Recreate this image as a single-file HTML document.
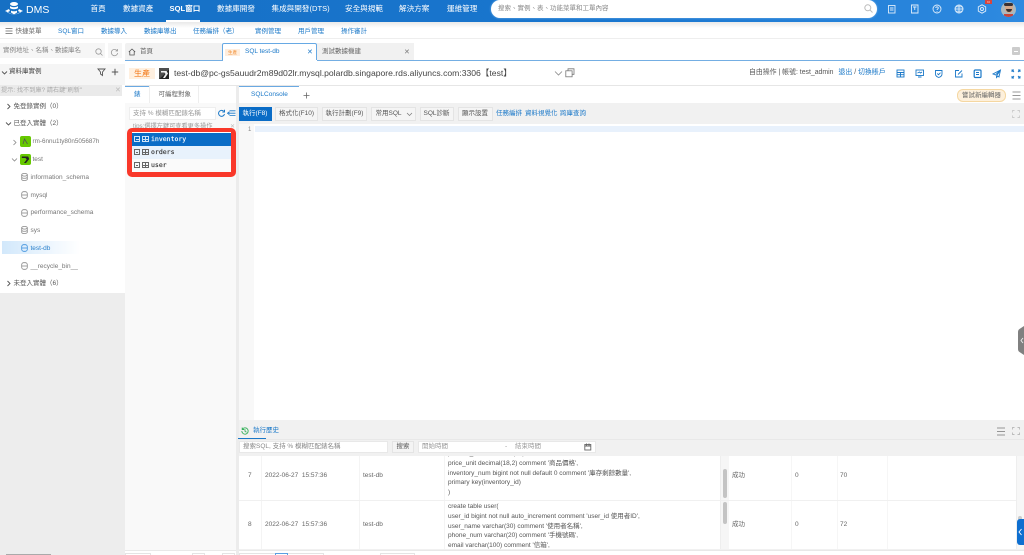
<!DOCTYPE html>
<html lang="zh-Hant"><head><meta charset="utf-8"><title>DMS</title>
<style>
*{box-sizing:border-box}
html,body{margin:0;padding:0;width:1024px;height:555px;overflow:hidden;background:#fff}
body{font-family:"Liberation Sans","Noto Sans CJK TC",sans-serif;font-size:7px;color:#555}
#w{position:absolute;left:0;top:0;width:1024px;height:555px;overflow:hidden;filter:blur(.35px)}
.a{position:absolute;white-space:nowrap;line-height:1}
.b{position:absolute}
.n{color:#fff;font-size:7.6px;top:4.500px}
.s{color:#1a78c8;font-size:6.500px;top:28.500px}
.t{font-size:6.500px;color:#666}
.bt{position:absolute;top:107px;height:14px;background:#f5f5f5;border:1px solid #e4e4e4;font-size:6.500px;color:#555;text-align:center;line-height:12.500px;white-space:nowrap}
svg{position:absolute;overflow:visible}
.ic{fill:none;stroke:#1a78c8;stroke-width:.9}
.wi{fill:none;stroke:#fff;stroke-width:.9;opacity:.85}
.m{font-family:"DejaVu Sans Mono","Liberation Mono",monospace;font-size:6.500px;color:#333;-webkit-text-stroke:.15px currentColor}
.sq{position:absolute;width:6px;height:6px;border:1px solid #666}
.sq:after{content:"";position:absolute;left:1px;top:1.500px;width:2px;height:1px;background:#666}
.g{position:absolute;width:7px;height:6px;border:1px solid #666;background:linear-gradient(#666,#666) 0 1.500px/100% 1px no-repeat,linear-gradient(#666,#666) 2px 0/1px 100% no-repeat}
.db{fill:none;stroke:#888;stroke-width:.8}
.r{font-size:6.500px;color:#555}
.arrow{fill:none;stroke:#555;stroke-width:.9}
</style></head><body><div id="w">

<!-- top bar -->
<div class="b" style="left:0;top:0;width:1024px;height:22px;background:linear-gradient(90deg,#1670c4,#1976cf 60%,#2e8ae0)"></div>
<svg style="left:4px;top:1px" width="20" height="16" viewBox="0 0 20 16"><ellipse cx="10" cy="3" rx="4" ry="2" fill="#fff"/><path d="M6 5c1 1.600 7 1.600 8 0v2c-1 1.600-7 1.600-8 0z" fill="#fff"/><path d="M7 9.500c1 1 5 1 6 0v2l-3 2-3-2z" fill="#fff"/><path d="M1 10l4-2 1 2-3 1.500 7 2.500 7-2.500-3-1.500 1-2 4 2-9 4z" fill="#fff"/></svg>
<div class="a" style="left:26px;top:4.500px;color:#fff;font-size:10.500px">DMS</div>
<div class="a n" style="left:90.500px">首頁</div>
<div class="a n" style="left:123px">數據資產</div>
<div class="a n" style="left:169.500px;font-weight:bold">SQL窗口</div>
<div class="a n" style="left:217px">數據庫開發</div>
<div class="a n" style="left:271.500px">集成與開發(DTS)</div>
<div class="a n" style="left:345px">安全與規範</div>
<div class="a n" style="left:399px">解決方案</div>
<div class="a n" style="left:447px">運維管理</div>
<div class="b" style="left:166px;top:20px;width:34px;height:2px;background:#fff"></div>
<div class="b" style="left:491px;top:0;width:386px;height:17.500px;background:#fff;border-radius:9px;box-shadow:0 0 2px #7ab5ea"></div>
<div class="a" style="left:498px;top:5.500px;font-size:6.500px;color:#888">搜索、實例、表、功能菜單和工單內容</div>
<svg style="left:864px;top:4px" width="9" height="9" viewBox="0 0 9 9"><circle cx="3.800" cy="3.800" r="3" fill="none" stroke="#bbb"/><path d="M6 6l2.500 2.500" stroke="#bbb"/></svg>
<svg style="left:887px;top:4px" width="10" height="10"><rect x="1.500" y="1.500" width="6.500" height="7.500" class="wi"/><path d="M3 4h3.500M3 6h3.500" class="wi"/></svg>
<svg style="left:910px;top:4px" width="10" height="10"><path d="M1.500 1h6.500v8h-6.500zM3 3h3.500M4.750 3v3" class="wi"/></svg>
<svg style="left:932px;top:4px" width="10" height="10"><circle cx="5" cy="5" r="4" class="wi"/><path d="M3.800 4c0-1.500 2.500-1.500 2.500 0 0 1-1.300 1-1.300 2M5 7v.7" class="wi"/></svg>
<svg style="left:954px;top:4px" width="10" height="10"><circle cx="5" cy="5" r="4" class="wi"/><path d="M1 5h8M5 1v8M2 2.800h6M2 7.200h6" class="wi"/></svg>
<svg style="left:977px;top:4px" width="10" height="10"><path d="M5 .8l3.700 2.100v4.200L5 9.200 1.300 7.100V2.900z" class="wi"/><circle cx="5" cy="5" r="1.500" class="wi"/></svg>
<div class="b" style="left:985px;top:0;width:7px;height:4px;background:#d9443a;color:#fff;font-size:3px;line-height:4px;text-align:center">N</div>
<div class="b" style="left:1001px;top:1.500px;width:15px;height:15px;border-radius:50%;background:#aab8bf;overflow:hidden"><div class="b" style="left:3.500px;top:2.500px;width:8px;height:9px;background:#d4a98a;border-radius:2px 2px 4px 4px"></div><div class="b" style="left:3px;top:1.500px;width:9px;height:3px;background:#3a3030;border-radius:2px"></div><div class="b" style="left:4.500px;top:7.500px;width:6px;height:3px;background:#3a3030;border-radius:0 0 3px 3px"></div><div class="b" style="left:3px;top:12.500px;width:9px;height:3px;background:#c8453c"></div></div>

<!-- sub nav -->
<div class="b" style="left:0;top:22px;width:1024px;height:17px;background:linear-gradient(#e9e9e9,#fff 6px);border-bottom:1px solid #eee"></div>
<svg style="left:5px;top:27.500px" width="9" height="7"><path d="M.5 .5h7M.5 3h7M.5 5.500h7" stroke="#666" stroke-width=".8"/></svg>
<div class="a t" style="left:15.500px;top:28.500px;font-size:6.500px">快捷菜單</div>
<div class="a s" style="left:58px">SQL窗口</div>
<div class="a s" style="left:101px">數據導入</div>
<div class="a s" style="left:144px">數據庫導出</div>
<div class="a s" style="left:193px">任務編排（老）</div>
<div class="a s" style="left:255px">實例管理</div>
<div class="a s" style="left:298px">用戶管理</div>
<div class="a s" style="left:341px">操作審計</div>

<!-- left panel -->
<div class="b" style="left:0;top:39px;width:125px;height:516px;background:#ededed"></div>
<div class="b" style="left:0;top:39px;width:125px;height:25px;background:#fff"></div>
<div class="b" style="left:0;top:43px;width:105px;height:15px;background:#f6f6f6"></div>
<div class="b" style="left:108px;top:43px;width:14px;height:15px;background:#f6f6f6"></div>
<div class="a" style="left:3px;top:47.500px;font-size:6.500px;color:#888">實例地址、名稱、數據庫名</div>
<svg style="left:95px;top:47.500px" width="9" height="9"><circle cx="3.500" cy="3.500" r="2.700" fill="none" stroke="#999" stroke-width=".8"/><path d="M5.500 5.500l2 2" stroke="#999" stroke-width=".8"/></svg>
<svg style="left:110px;top:47.500px" width="9" height="9"><path d="M7 2.500A3.200 3.200 0 1 0 7.700 5M7.500 1v2H5.500" fill="none" stroke="#999" stroke-width=".8"/></svg>
<div class="b" style="left:0;top:64px;width:125px;height:21px;background:#f5f5f5"></div>
<svg style="left:1px;top:70px" width="7" height="6"><path d="M1 1.500l2.500 2.500L6 1.500" class="arrow"/></svg>
<div class="a" style="left:9px;top:69px;font-size:6.500px;color:#444">資料庫實例</div>
<svg style="left:97px;top:67.500px" width="9" height="9"><path d="M1 1h7L5.500 4v3.500L3.500 6V4z" fill="none" stroke="#555" stroke-width=".9"/></svg>
<svg style="left:111px;top:68px" width="8" height="8"><path d="M4 .8v6.400M.8 4h6.400" stroke="#555"/></svg>
<div class="b" style="left:0;top:85px;width:125px;height:270px;background:#fff"></div>
<div class="b" style="left:0;top:85px;width:122px;height:11px;background:#eaeaea"></div>
<div class="a" style="left:1px;top:87.500px;font-size:6.200px;color:#aaa">提示: 找不到庫? 請右鍵"刷新"</div>
<div class="a" style="left:115px;top:87px;font-size:7px;color:#bbb">✕</div>

<svg style="left:6px;top:103px" width="6" height="7"><path d="M1.500 1l2.500 2.500L1.500 6" class="arrow"/></svg>
<div class="a r" style="left:13.500px;top:103.500px">免登錄實例（0）</div>
<svg style="left:5px;top:120.500px" width="7" height="6"><path d="M1 1.500l2.500 2.500L6 1.500" class="arrow"/></svg>
<div class="a r" style="left:13.500px;top:121px">已登入實體（2）</div>
<svg style="left:12px;top:138.500px" width="6" height="7"><path d="M1.500 1l2.500 2.500L1.500 6" fill="none" stroke="#888" stroke-width=".8"/></svg>
<div class="b" style="left:20px;top:136px;width:11px;height:11px;background:#66c800;border-radius:2px"></div>
<svg style="left:21px;top:137px" width="9" height="9"><path d="M2 7l1.500-5 3 5" fill="none" stroke="#555" stroke-width=".8"/></svg>
<div class="a r" style="left:32.500px;top:139px;color:#777;font-size:6.300px">rm-6nnu1ty80n505687h</div>
<svg style="left:11px;top:156.500px" width="7" height="6"><path d="M1 1.500l2.500 2.500L6 1.500" fill="none" stroke="#888" stroke-width=".8"/></svg>
<div class="b" style="left:20px;top:154px;width:11px;height:11px;background:#66c800;border-radius:2px"></div>
<svg style="left:21px;top:155px" width="9" height="9"><path d="M.8 1.500h6.400L8.200 4 5 8H3l2.700-3.500L4.500 3H.8z" fill="#222"/></svg>
<div class="a r" style="left:32.500px;top:157px;color:#777">test</div>
<svg style="left:21px;top:173px" width="7" height="8"><ellipse cx="3.500" cy="1.800" rx="2.800" ry="1.300" class="db"/><path d="M.7 1.800v4.400c0 1.700 5.600 1.700 5.600 0V1.800M.7 4c0 1.700 5.600 1.700 5.600 0" class="db"/></svg>
<div class="a r" style="left:30.500px;top:174.500px;color:#777">information_schema</div>
<svg style="left:21px;top:191px" width="7" height="8"><rect x=".7" y=".7" width="5.600" height="6.600" rx="2" class="db"/><path d="M.7 4h5.600" class="db"/></svg>
<div class="a r" style="left:30.500px;top:192.500px;color:#777">mysql</div>
<svg style="left:21px;top:208.500px" width="7" height="8"><rect x=".7" y=".7" width="5.600" height="6.600" rx="2" class="db"/><path d="M.7 4h5.600" class="db"/></svg>
<div class="a r" style="left:30.500px;top:210px;color:#777">performance_schema</div>
<svg style="left:21px;top:226px" width="7" height="8"><ellipse cx="3.500" cy="1.800" rx="2.800" ry="1.300" class="db"/><path d="M.7 1.800v4.400c0 1.700 5.600 1.700 5.600 0V1.800M.7 4c0 1.700 5.600 1.700 5.600 0" class="db"/></svg>
<div class="a r" style="left:30.500px;top:228px;color:#777">sys</div>
<div class="b" style="left:2px;top:241px;width:78px;height:13px;background:linear-gradient(90deg,#d2e8fb,#fff)"></div>
<svg style="left:21px;top:244px" width="7" height="8"><rect x=".7" y=".7" width="5.600" height="6.600" rx="2" fill="none" stroke="#3a8fdc" stroke-width=".8"/><path d="M.7 4h5.600" stroke="#3a8fdc" stroke-width=".8"/></svg>
<div class="a r" style="left:30.500px;top:246px;color:#2a80cc">test-db</div>
<svg style="left:21px;top:262px" width="7" height="8"><rect x=".7" y=".7" width="5.600" height="6.600" rx="2" class="db"/><path d="M.7 4h5.600" class="db"/></svg>
<div class="a r" style="left:30.500px;top:264px;color:#777">__recycle_bin__</div>
<svg style="left:6px;top:280px" width="6" height="7"><path d="M1.500 1l2.500 2.500L1.500 6" class="arrow"/></svg>
<div class="a r" style="left:13.500px;top:280.500px">未登入實體（6）</div>
<div class="b" style="left:0;top:293px;width:125px;height:262px;background:#ededed"></div>
<div class="b" style="left:6px;top:554px;width:45px;height:1px;background:#aaa"></div>
<svg style="left:125px;top:282px" width="7" height="33"><path d="M0 0l7 3v27l-7 3z" fill="#808080"/><path d="M4.500 13l-2.500 3 2.500 3" fill="none" stroke="#ddd" stroke-width=".7"/></svg>

<!-- tab bar -->
<div class="b" style="left:125px;top:43px;width:97px;height:17px;background:#f1f1f1;border-radius:2px 2px 0 0"></div>
<svg style="left:128px;top:48px" width="8" height="8"><path d="M.8 4L4 1l3.200 3M1.800 3.500v3.500h4.400V3.500" fill="none" stroke="#555" stroke-width=".8"/></svg>
<div class="a t" style="left:140px;top:49px">首頁</div>
<div class="b" style="left:222px;top:43px;width:95px;height:18px;background:#fff;border:1px solid #67a9e4;border-bottom:0;border-radius:2px 2px 0 0"></div>
<div class="b" style="left:225px;top:49px;width:15px;height:7px;background:#ffeede;color:#f08a2c;font-size:4.500px;line-height:7px;text-align:center">生產</div>
<div class="a" style="left:245px;top:49px;font-size:6.500px;color:#1a78c8">SQL test-db</div>
<div class="a" style="left:307px;top:48.500px;font-size:7px;color:#1a78c8">✕</div>
<div class="b" style="left:317px;top:43px;width:97px;height:17px;background:#f1f1f1"></div>
<div class="a t" style="left:322px;top:49px">測試數據機建</div>
<div class="a" style="left:404px;top:48.500px;font-size:7px;color:#777">✕</div>
<div class="b" style="left:125px;top:59.500px;width:899px;height:1.500px;background:#74aee3"></div>
<div class="b" style="left:222.500px;top:59.500px;width:94px;height:1.500px;background:#fff"></div>
<div class="b" style="left:1012px;top:47px;width:8px;height:8px;background:#ccc;border-radius:1px"></div>
<div class="b" style="left:1014px;top:50.500px;width:4px;height:1px;background:#fff"></div>

<!-- db header -->
<div class="b" style="left:129px;top:68px;width:26px;height:11px;background:#fff0e0;color:#f37b1d;font-size:8px;line-height:11px;text-align:center">生產</div>
<div class="b" style="left:159px;top:68px;width:10px;height:11px;background:#222"></div>
<svg style="left:159px;top:68px" width="10" height="11"><path d="M0 0h10v1.500L2 9.500 0 11z" fill="#fff" opacity=".2"/><path d="M2 3h5.500L9 5.500 6 10H4l2.500-4L5.500 4.500H2z" fill="#eee"/></svg>
<div class="a" style="left:174px;top:69px;font-size:8.600px;color:#444">test-db@pc-gs5auudr2m89d02lr.mysql.polardb.singapore.rds.aliyuncs.com:3306【test】</div>
<svg style="left:554px;top:70px" width="9" height="7"><path d="M1 1.500l3.500 3.500L8 1.500" fill="none" stroke="#888" stroke-width=".8"/></svg>
<svg style="left:565px;top:68px" width="10" height="10"><path d="M3 2.500V.8h6v5.500H7.300" fill="none" stroke="#777" stroke-width=".8"/><rect x=".8" y="2.800" width="6.300" height="6" fill="none" stroke="#777" stroke-width=".8"/></svg>
<div class="a" style="left:749px;top:69.500px;font-size:6.900px;color:#555">自由操作 | 帳號: test_admin</div>
<div class="a" style="left:838.500px;top:69.500px;font-size:6.900px;color:#555"><span style="color:#1a78c8">退出</span> / <span style="color:#1a78c8">切換賬戶</span></div>
<svg style="left:896px;top:69px" width="10" height="10"><rect x="1" y="1" width="7" height="7" class="ic"/><path d="M1 3.500h7M1 5.700h7M4.500 3.500V8" class="ic"/></svg>
<svg style="left:915px;top:69px" width="10" height="10"><rect x="1" y="1" width="7.500" height="5.500" class="ic"/><path d="M3 8h3.500M2.500 4l2-1 1 1 1.500-1" class="ic"/></svg>
<svg style="left:934px;top:69px" width="10" height="10"><path d="M1.500 1.500h6.500v3.500c0 2-1.800 3-3.250 3.500C3.300 8 1.500 7 1.500 5zM3.300 4.500l1.200 1.200 2-2" class="ic"/></svg>
<svg style="left:954px;top:69px" width="10" height="10"><path d="M5 1.500H1.500V8H8V4.500M4 5.500L8 1.500" class="ic"/></svg>
<svg style="left:973px;top:69px" width="10" height="10"><rect x="1.200" y="1" width="6.800" height="7.500" rx="1" fill="none" stroke="#1a78c8" stroke-width="1.200"/><path d="M3 3.500h3M3 5.500h3" class="ic"/></svg>
<svg style="left:992px;top:69px" width="10" height="10"><path d="M8.500 1L1 5l2.500 1L8.500 1 4.500 7v1.500L6 7l1 1z" class="ic"/></svg>
<svg style="left:1011px;top:69px" width="10" height="10"><path d="M1 3V1h2M7 1h2v2M9 7v2H7M3 9H1V7M1 1l2 2M9 1L7 3M9 9L7 7M1 9l2-2" class="ic"/></svg>
<div class="b" style="left:125px;top:85px;width:899px;height:1px;background:#e6e6e6"></div>

<!-- middle column -->
<div class="b" style="left:125px;top:86px;width:111px;height:464px;background:#f9f9f9"></div>
<div class="b" style="left:125px;top:86px;width:24px;height:17px;background:#fff;border-top:1px solid #6aa9e2"></div>
<div class="a" style="left:134px;top:92px;font-size:6.500px;color:#1a78c8">錶</div>
<div class="b" style="left:149px;top:86px;width:50px;height:17px;background:#fff;border-right:1px solid #eee;border-left:1px solid #eee"></div>
<div class="a t" style="left:158.500px;top:92px">可編程對象</div>
<div class="b" style="left:199px;top:86px;width:37px;height:17px;background:#fff"></div>
<div class="b" style="left:129px;top:107px;width:87px;height:13px;background:#fff;border:1px solid #eee"></div>
<div class="a" style="left:133px;top:110.500px;font-size:6.500px;color:#999">支持 % 模糊匹配錶名稱</div>
<svg style="left:216.500px;top:109px" width="9" height="9"><path d="M6.700 2.200A3 3 0 1 0 7.500 5M7.500 .8v2.200H5.300" fill="none" stroke="#1a78c8" stroke-width="1"/></svg>
<svg style="left:227px;top:110px" width="9" height="7"><path d="M2.500 .8h6M2.500 3.200h6M2.500 5.600h6M.5 3.200L2 2v2.400z" stroke="#1a78c8" stroke-width=".8" fill="none"/></svg>
<div class="a" style="left:133px;top:123.500px;font-size:6.200px;color:#999">tips:選擇左鍵可查看更多操作</div>
<div class="a" style="left:230px;top:123.500px;font-size:6px;color:#bbb">✕</div>

<!-- red box + tree -->
<div class="b" style="left:127px;top:127.500px;width:109px;height:49.500px;background:#f9382a;border-radius:5px"></div>
<div class="b" style="left:132px;top:132px;width:99px;height:40px;background:#fff"></div>
<div class="b" style="left:132px;top:133px;width:99px;height:13px;background:#0a6cc6"></div>
<div class="b" style="left:132px;top:146px;width:99px;height:13px;background:#e8f2fc"></div>
<div class="b" style="left:132px;top:159px;width:99px;height:12.500px;background:#fafafa"></div>
<div class="sq" style="left:134px;top:136px;border-color:#cfe4f7"></div><div class="b" style="left:135.500px;top:138.500px;width:3px;height:1px;background:#cfe4f7"></div>
<div class="g" style="left:142px;top:136px;border-color:#cfe4f7;background:linear-gradient(#cfe4f7,#cfe4f7) 0 1.500px/100% 1px no-repeat,linear-gradient(#cfe4f7,#cfe4f7) 2px 0/1px 100% no-repeat"></div>
<div class="a m" style="left:151px;top:136px;color:#fff">inventory</div>
<div class="sq" style="left:134px;top:149px"></div>
<div class="g" style="left:142px;top:149px"></div>
<div class="a m" style="left:151px;top:149px">orders</div>
<div class="sq" style="left:134px;top:162px"></div>
<div class="g" style="left:142px;top:162px"></div>
<div class="a m" style="left:151px;top:162px">user</div>

<!-- divider -->
<div class="b" style="left:236px;top:86px;width:3px;height:464px;background:#ececec"></div>

<!-- editor tabs -->
<div class="b" style="left:239px;top:86px;width:60px;height:17px;background:#fff;border-top:1px solid #6aa9e2"></div>
<div class="a" style="left:251px;top:92px;font-size:6.500px;color:#1a78c8">SQLConsole</div>
<svg style="left:303px;top:91.500px" width="7" height="7"><path d="M3.500 .5v6M.5 3.500h6" stroke="#666" stroke-width=".8"/></svg>
<div class="b" style="left:957px;top:89px;width:49px;height:13px;background:#fdf0dc;border:1px solid #f5d7a1;border-radius:6px;color:#666;font-size:6.500px;line-height:11px;text-align:center">嘗試新編輯器</div>
<svg style="left:1012px;top:91px" width="9" height="9"><path d="M.5 1h8M.5 4.500h8M.5 8h8" stroke="#777" stroke-width=".8"/></svg>
<div class="b" style="left:239px;top:103px;width:785px;height:21px;background:#f1f1f1"></div>
<div class="bt" style="left:238.500px;width:33px;background:#0a6cc6;border-color:#0a6cc6;color:#fff">執行(F8)</div>
<div class="bt" style="left:275px;width:43px">格式化(F10)</div>
<div class="bt" style="left:322px;width:45px">執行計劃(F9)</div>
<div class="bt" style="left:370.500px;width:45px;text-align:left;padding-left:4px">常用SQL</div>
<svg style="left:406px;top:112px" width="7" height="5"><path d="M1 1l2.500 2.500L6 1" fill="none" stroke="#777" stroke-width=".7"/></svg>
<div class="bt" style="left:419.500px;width:34px">SQL診斷</div>
<div class="bt" style="left:457.500px;width:35px">顯示設置</div>
<div class="a" style="left:496px;top:111px;font-size:6.500px;color:#1a78c8">任務編排</div>
<div class="a" style="left:525px;top:111px;font-size:6.500px;color:#1a78c8">資料視覺化</div>
<div class="a" style="left:560px;top:111px;font-size:6.500px;color:#1a78c8">跨庫查詢</div>
<svg style="left:1012px;top:110px" width="8" height="8"><path d="M.5 2.500V.5h2M5.500 .5h2v2M7.500 5.500v2h-2M2.500 7.500h-2v-2" fill="none" stroke="#ccc" stroke-width=".9"/></svg>

<!-- editor -->
<div class="b" style="left:239px;top:124px;width:15px;height:296px;background:#f8f8f8"></div>
<div class="a" style="left:248px;top:126.500px;font-size:6px;color:#888">1</div>
<div class="b" style="left:255px;top:126px;width:769px;height:6px;background:#e8f1fc"></div>

<!-- right scroll handle -->
<svg style="left:1018px;top:326px" width="6" height="29"><path d="M6 0L1.500 3Q0 4 0 6v17q0 2 1.500 3L6 29z" fill="#808080"/><path d="M5 12l-2 2.500 2 2.500" fill="none" stroke="#eee" stroke-width=".9"/></svg>

<!-- history -->
<div class="b" style="left:236px;top:420px;width:788px;height:130px;background:#f1f1f1"></div>
<div class="b" style="left:236px;top:420px;width:3px;height:130px;background:#ececec"></div>
<svg style="left:241px;top:427px" width="8" height="8"><path d="M1.500 2A3.200 3.200 0 1 1 .8 4M1.200 .5V2.500h2M4 2.200V4.200l1.500 1" fill="none" stroke="#35b05a" stroke-width=".9"/></svg>
<div class="a" style="left:253px;top:427.500px;font-size:6.500px;color:#1a78c8">執行歷史</div>
<div class="b" style="left:238px;top:438px;width:28px;height:1px;background:#1a78c8"></div>
<svg style="left:997px;top:427px" width="8" height="9"><path d="M0 1h8M0 4.500h8M0 8h8" stroke="#777" stroke-width=".8"/></svg>
<svg style="left:1012px;top:427px" width="8" height="8"><path d="M.5 2.500V.5h2M5.500 .5h2v2M7.500 5.500v2h-2M2.500 7.500h-2v-2" fill="none" stroke="#bbb" stroke-width=".9"/></svg>
<div class="b" style="left:239px;top:439px;width:785px;height:1px;background:#e8e8e8"></div>
<div class="b" style="left:239px;top:441px;width:149px;height:12px;background:#fff;border:1px solid #e8e8e8"></div>
<div class="a" style="left:243px;top:443.500px;font-size:6.500px;color:#888">搜索SQL, 支持 % 模糊匹配錶名稱</div>
<div class="bt" style="left:392px;top:441px;width:22px;height:12px;line-height:10px;background:#f4f4f4">搜索</div>
<div class="b" style="left:418px;top:441px;width:178px;height:12px;background:#fff;border:1px solid #e8e8e8"></div>
<div class="a" style="left:422px;top:443.500px;font-size:6.500px;color:#999">開始時間</div>
<div class="a" style="left:505px;top:443.500px;font-size:6.500px;color:#999">-</div>
<div class="a" style="left:515px;top:443.500px;font-size:6.500px;color:#999">結束時間</div>
<svg style="left:584px;top:443px" width="8" height="8"><rect x=".8" y="1.500" width="6" height="5.500" fill="none" stroke="#666" stroke-width=".9"/><path d="M.8 3h6M2.500 .5v2M5 .5v2" stroke="#666" stroke-width=".9"/></svg>

<!-- table -->
<div class="b" style="left:239px;top:456px;width:777px;height:92.500px;background:#fff"></div>
<div class="b" style="left:1016px;top:456px;width:8px;height:92.500px;background:#f7f7f7;border-left:1px solid #eee"></div>
<div class="b" style="left:261px;top:456px;width:1px;height:92.500px;background:#f4f4f4"></div>
<div class="b" style="left:359px;top:456px;width:1px;height:92.500px;background:#f4f4f4"></div>
<div class="b" style="left:444px;top:456px;width:1px;height:92.500px;background:#f4f4f4"></div>
<div class="b" style="left:720px;top:456px;width:9px;height:92.500px;background:#f6f6f6;border-left:1px solid #eee"></div>
<div class="b" style="left:791px;top:456px;width:1px;height:92.500px;background:#f6f6f6"></div>
<div class="b" style="left:836.500px;top:456px;width:1px;height:92.500px;background:#f6f6f6"></div>
<div class="b" style="left:887px;top:456px;width:1px;height:92.500px;background:#f6f6f6"></div>
<div class="b" style="left:239px;top:500px;width:777px;height:1px;background:#f0f0f0"></div>
<div class="b" style="left:722.500px;top:469px;width:4.500px;height:29px;background:#c4c4c4;border-radius:2.500px"></div>
<div class="b" style="left:722.500px;top:502px;width:4.500px;height:22px;background:#c4c4c4;border-radius:2.500px"></div>
<div class="a t" style="left:248px;top:472.500px">7</div>
<div class="a t" style="left:265px;top:472.500px">2022-06-27&nbsp;&nbsp;15:57:36</div>
<div class="a t" style="left:363px;top:472.500px">test-db</div>
<div class="a t" style="left:248px;top:521.500px">8</div>
<div class="a t" style="left:265px;top:521.500px">2022-06-27&nbsp;&nbsp;15:57:36</div>
<div class="a t" style="left:363px;top:521.500px">test-db</div>
<div class="b" style="left:448px;top:456px;width:270px;height:92.500px;overflow:hidden;font-size:6.500px;color:#555;line-height:9.750px;white-space:nowrap">
<div style="margin-top:-7px">product_name varchar(50) comment '商品名稱',</div>
<div>price_unit decimal(18,2) comment '商品價格',</div>
<div>inventory_num bigint not null default 0 comment '庫存剩餘數量',</div>
<div>primary key(inventory_id)</div>
<div>)</div>
<div style="margin-top:4.300px">create table user(</div>
<div>user_id bigint not null auto_increment comment 'user_id 使用者ID',</div>
<div>user_name varchar(30) comment '使用者名稱',</div>
<div>phone_num varchar(20) comment '手機號碼',</div>
<div>email varchar(100) comment '信箱',</div>
</div>
<div class="a t" style="left:732px;top:472.500px">成功</div>
<div class="a t" style="left:795px;top:472.500px">0</div>
<div class="a t" style="left:840px;top:472.500px">70</div>
<div class="a t" style="left:732px;top:521.500px">成功</div>
<div class="a t" style="left:795px;top:521.500px">0</div>
<div class="a t" style="left:840px;top:521.500px">72</div>
<div class="b" style="left:1018px;top:516px;width:4px;height:5px;background:#ccc;border-radius:2px"></div>
<div class="b" style="left:1017px;top:519px;width:7px;height:26px;background:#0e6fd0;border-radius:3px 0 0 3px"></div>
<svg style="left:1018px;top:528px" width="5" height="8"><path d="M3.500 1L1 4l2.500 3" fill="none" stroke="#fff" stroke-width=".9"/></svg>

<!-- bottom strip -->
<div class="b" style="left:125px;top:550px;width:899px;height:5px;background:#fff"></div>
<div class="b" style="left:125px;top:549.500px;width:899px;height:1px;background:#e8e8e8"></div>
<div class="b" style="left:236px;top:550px;width:3px;height:5px;background:#ececec"></div>
<div class="b" style="left:125px;top:553px;width:26px;height:2px;border:1px solid #e4e4e4;border-bottom:0"></div>
<div class="b" style="left:192px;top:552.500px;width:13px;height:3px;border:1px solid #e4e4e4;border-bottom:0"></div>
<div class="b" style="left:222px;top:552.500px;width:13px;height:3px;border:1px solid #e4e4e4;border-bottom:0"></div>
<div class="b" style="left:239px;top:553px;width:85px;height:2px;border:1px solid #e4e4e4;border-bottom:0"></div>
<div class="b" style="left:275px;top:552.500px;width:13px;height:3px;border:1px solid #5a9ee0;border-bottom:0"></div>
<div class="b" style="left:380px;top:552.500px;width:35px;height:3px;border:1px solid #e4e4e4;border-bottom:0"></div>

</div></body></html>
